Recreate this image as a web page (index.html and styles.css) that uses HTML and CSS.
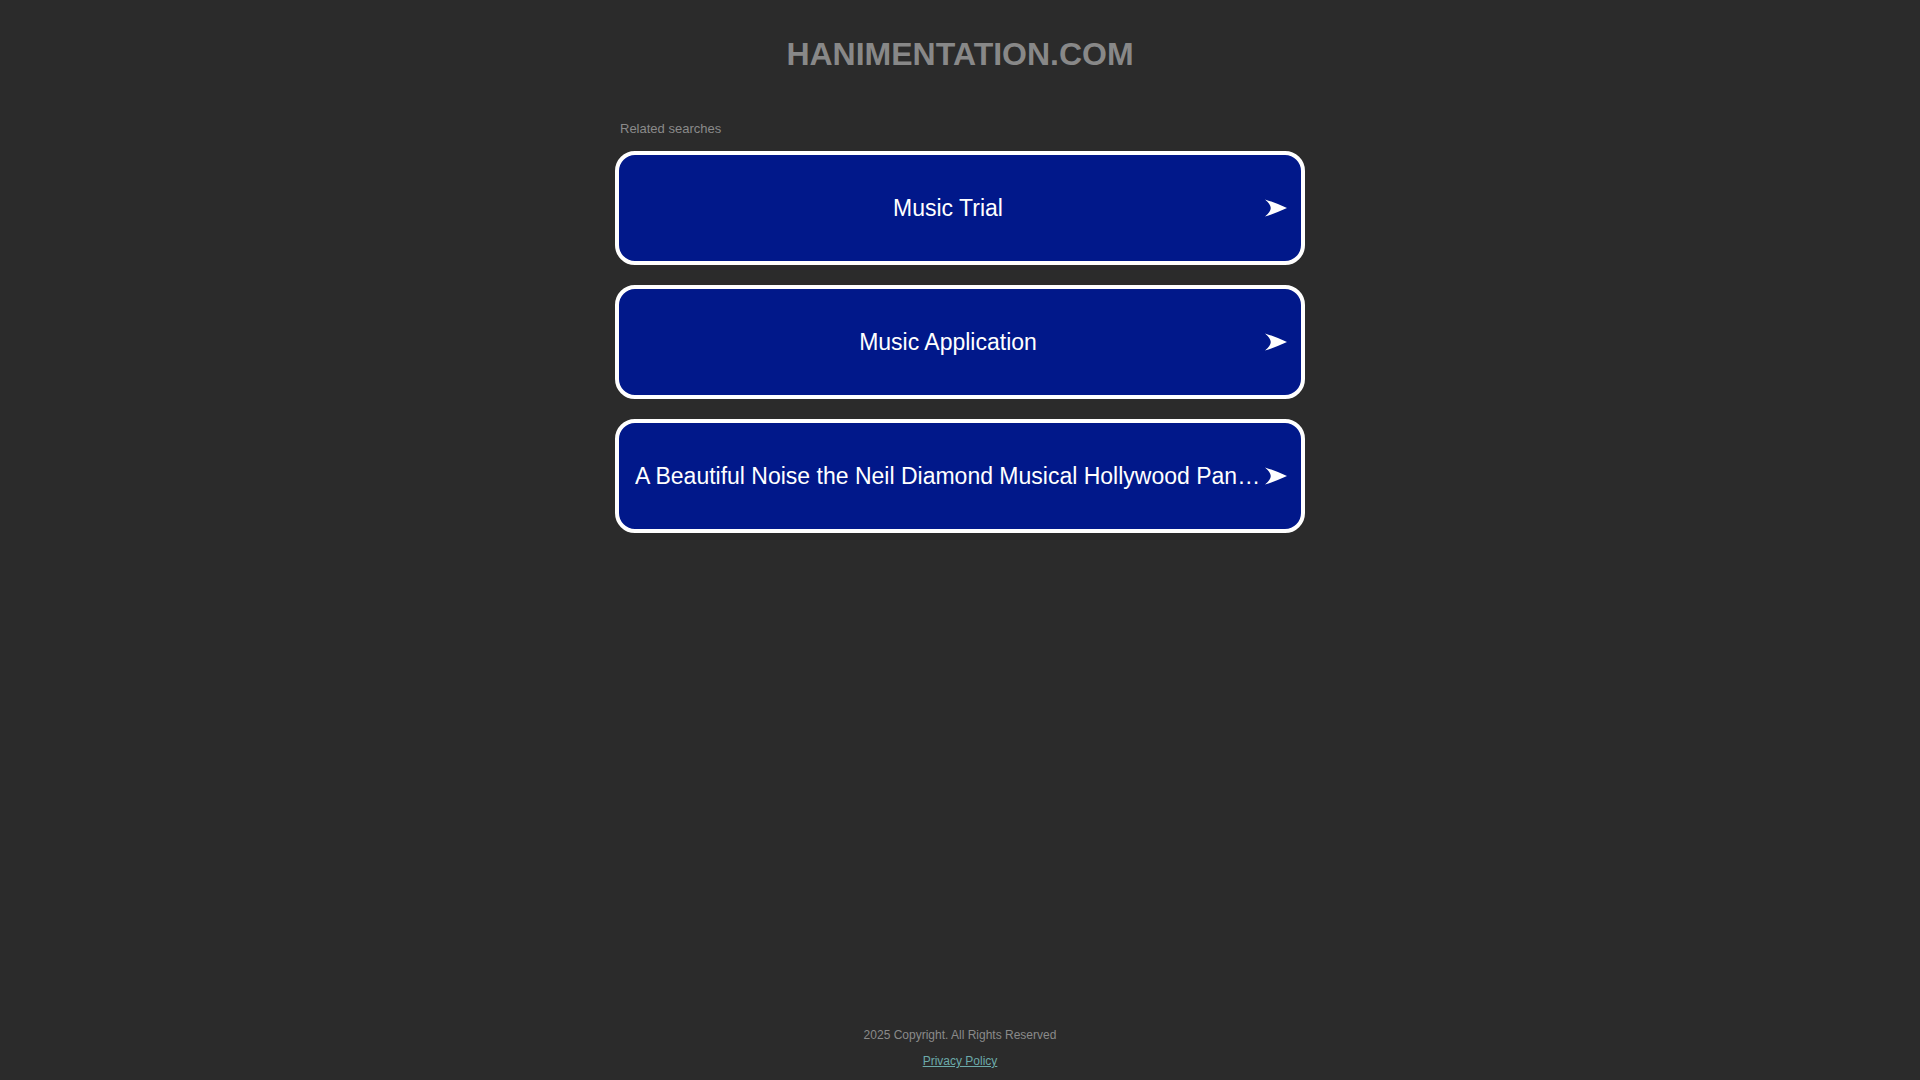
FILE: index.html
```html
<!DOCTYPE html>
<html lang="en">
<head>
<meta charset="utf-8">
<title>hanimentation.com</title>
<link rel="stylesheet" href="styles.css">
</head>
<body>
<div class="page">
  <header class="header">
    <h1 class="domain">HANIMENTATION.COM</h1>
  </header>
  <main class="content">
    <div class="related">Related searches</div>
    <div class="blocks">
      <a class="block" href="#">
        <span class="block-text">Music Trial</span>
        <svg class="arrow" width="22" height="18" viewBox="0 0 21 17"><path d="M0 0.3 Q10 3.5 21 8.5 Q10 13.5 0 16.7 Q5.5 12 5.5 8.5 Q5.5 5 0 0.3 Z" fill="#fff"/></svg>
      </a>
      <a class="block" href="#">
        <span class="block-text">Music Application</span>
        <svg class="arrow" width="22" height="18" viewBox="0 0 21 17"><path d="M0 0.3 Q10 3.5 21 8.5 Q10 13.5 0 16.7 Q5.5 12 5.5 8.5 Q5.5 5 0 0.3 Z" fill="#fff"/></svg>
      </a>
      <a class="block" href="#">
        <span class="block-text">A Beautiful Noise the Neil Diamond Musical Hollywood Pantages Tickets</span>
        <svg class="arrow" width="22" height="18" viewBox="0 0 21 17"><path d="M0 0.3 Q10 3.5 21 8.5 Q10 13.5 0 16.7 Q5.5 12 5.5 8.5 Q5.5 5 0 0.3 Z" fill="#fff"/></svg>
      </a>
    </div>
  </main>
  <footer class="footer">
    <div class="copyright">2025 Copyright. All Rights Reserved</div>
    <a class="privacy" href="#">Privacy Policy</a>
  </footer>
</div>
</body>
</html>
```

FILE: styles.css
```css
html, body {
  margin: 0;
  padding: 0;
  background: #2b2b2b;
}

body {
  font-family: "Liberation Sans", Arial, sans-serif;
}

.page {
  min-height: 100vh;
  display: flex;
  flex-direction: column;
  align-items: center;
  box-sizing: border-box;
}

.header {
  padding-top: 35px;
}

.domain {
  margin: 0;
  font-size: 32px;
  line-height: 38px;
  font-weight: bold;
  color: #888888;
  text-align: center;
}

.content {
  width: 690px;
  margin-top: 48px;
}

.related {
  font-size: 13px;
  line-height: 16px;
  color: #8a8a8a;
  padding-left: 5px;
  margin-bottom: 14px;
}

.blocks {
  display: flex;
  flex-direction: column;
  gap: 20px;
}

.block {
  display: flex;
  align-items: center;
  height: 114px;
  box-sizing: border-box;
  border: 4px solid #ffffff;
  border-radius: 20px;
  background: #01188a;
  padding: 0 14px 0 16px;
  color: #ffffff;
  text-decoration: none;
}

.block-text {
  flex: 1;
  min-width: 0;
  font-size: 23px;
  line-height: 28px;
  text-align: center;
  white-space: nowrap;
  overflow: hidden;
  text-overflow: ellipsis;
  margin-right: 4px;
}

.arrow {
  flex: none;
  display: block;
}

.footer {
  margin-top: auto;
  padding-bottom: 11px;
  display: flex;
  flex-direction: column;
  align-items: center;
  gap: 10px;
}

.copyright {
  font-size: 12px;
  line-height: 16px;
  color: #8a8a8a;
}

.privacy {
  font-size: 12px;
  line-height: 16px;
  color: #6caaaa;
  text-decoration: underline;
}
```
